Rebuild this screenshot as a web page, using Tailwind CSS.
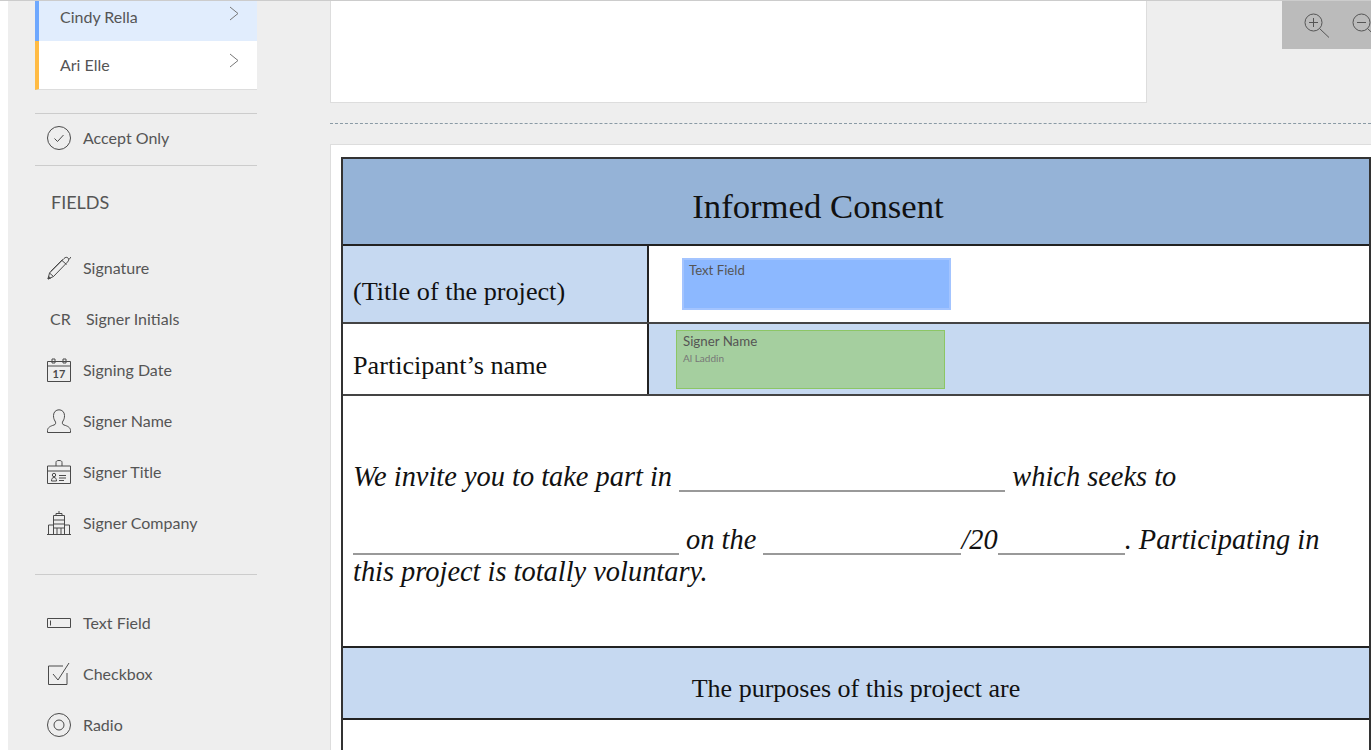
<!DOCTYPE html>
<html><head><meta charset="utf-8"><script src="https://cdn.jsdelivr.net/npm/@tailwindcss/browser@4"></script></head>
<body class="m-0 w-[1371px] h-[750px] overflow-hidden bg-white font-['Lato','Noto_Sans',sans-serif] text-[#555]">
<div class="relative flex h-[750px] border-t border-[#ccc]">
  <div class="w-2 shrink-0 bg-white"></div>
  <aside class="w-[322px] shrink-0 bg-[#eeeeee] pl-[27px] pr-[73px] text-[16px]">
    <div class="flex h-10 items-start justify-between border-l-4 border-[#6ea8fe] bg-[#e1edfd] pl-[21px] pr-[18px] text-[#555]"><span class="mt-[6px] leading-5">Cindy Rella</span><svg class="mt-[5px]" width="10" height="16" viewBox="0 0 10 16" fill="none" stroke="#777"><path d="M1 1l8 6.500-8 6.500"/></svg></div>
    <div class="flex h-[49px] items-start justify-between border-b border-[#ddd] border-l-4 border-l-[#ffbb44] bg-white pl-[21px] pr-[18px]"><span class="mt-[14px] leading-5">Ari Elle</span><svg class="mt-[12px]" width="10" height="16" viewBox="0 0 10 16" fill="none" stroke="#777"><path d="M1 1l8 6.500-8 6.500"/></svg></div>
    <div class="mt-[23px] flex h-[53px] items-center gap-[12px] border-y border-[#ccc] pb-[4px] pl-3">
      <svg width="24" height="24" viewBox="0 0 24 24" fill="none" stroke="#4a4a4a"><circle cx="12" cy="12" r="11.500"/><path d="M7.500 12.500l3 3 6-6.500"/></svg><span>Accept Only</span></div>
    <div class="mt-[25px] pl-4 text-[18px] leading-[22px]">FIELDS</div>
    <div class="mt-[29px]">
      <div class="flex h-[51px] items-center gap-[12px] pl-3"><svg width="24" height="24" viewBox="0 0 24 24" fill="none" stroke="#4a4a4a"><path d="M1 23l1.500-6L17 2.500c1.500-1.500 3-1.500 4-.5s1 2.500-.5 4L6.500 20.500z"/><path d="M2.500 17l4 3.500M15 4.500l4.500 4M3.500 15.500l12-12M22 3.500L24 1"/><path d="M1 23l2.500-.8-1.800-1.700z" fill="#4a4a4a"/></svg><span>Signature</span></div>
      <div class="flex h-[51px] items-center pl-[15px]"><span class="w-[36px]">CR</span><span>Signer Initials</span></div>
      <div class="flex h-[51px] items-center gap-[12px] pl-3"><svg width="24" height="24" viewBox="0 0 24 24" fill="none" stroke="#4a4a4a"><path d="M.5 3.500h23v20H.5zM.5 8h23M5 1h3v4H5zM16 1h3v4h-3z"/><text x="12" y="20" text-anchor="middle" font-size="11" font-family="Lato" fill="#4a4a4a" stroke="none" font-weight="700">17</text></svg><span>Signing Date</span></div>
      <div class="flex h-[51px] items-center gap-[12px] pl-3"><svg width="24" height="24" viewBox="0 0 24 24" fill="none" stroke="#4a4a4a"><path d="M.5 23.500v-2c0-3 3-4.500 6.500-5.500 2-.6 2-2.500 1-4-1-1.500-1.500-3-1.500-5.500C6.500 3 9 .8 12 .8s5.500 2.200 5.500 5.700c0 2.500-.5 4-1.500 5.500-1 1.500-1 3.400 1 4 3.500 1 6.500 2.500 6.500 5.500v2z"/></svg><span>Signer Name</span></div>
      <div class="flex h-[51px] items-center gap-[12px] pl-3"><svg width="24" height="24" viewBox="0 0 24 24" fill="none" stroke="#4a4a4a"><path d="M.5 6h23v17.500H.5zM.5 11h23M9 6V2.500C9 1 10 .5 12 .5s3 .5 3 2V6"/><circle cx="7" cy="15" r="1.700"/><path d="M4.500 21c0-2.500 1-3.500 2.500-3.500s2.500 1 2.500 3.500zM12 15.500h7M12 18h7M12 20.500h5"/></svg><span>Signer Title</span></div>
      <div class="flex h-[51px] items-center gap-[12px] pl-3"><svg width="24" height="24" viewBox="0 0 24 24" fill="none" stroke="#4a4a4a"><path d="M0 23.500h24M1.500 23.500V14h5v9.500M17.500 23.500V14h5v9.500M6.500 23.500V4.500h11v19M9 4.500V2.500h6v2M12 2.500V0M6.500 9h11M6.500 13h11M6.500 17h11M10 17v6.500M14 17v6.500"/></svg><span>Signer Company</span></div>
    </div>
    <div class="mt-[26px] border-t border-[#ccc]"></div>
    <div class="mt-[22px]">
      <div class="flex h-[51px] items-center gap-[12px] pl-3"><svg width="24" height="10" viewBox="0 0 24 10" fill="none" stroke="#4a4a4a"><path d="M.5.500h23v9H.5zM3.500 2.500v5"/></svg><span>Text Field</span></div>
      <div class="flex h-[51px] items-center gap-[12px] pl-3"><svg width="24" height="24" viewBox="0 0 24 24" fill="none" stroke="#4a4a4a"><path d="M20 11v11.500H1.500V4H16"/><path d="M6 12l5 6 11-17"/></svg><span>Checkbox</span></div>
      <div class="flex h-[51px] items-center gap-[12px] pl-3"><svg width="24" height="24" viewBox="0 0 24 24" fill="none" stroke="#4a4a4a"><circle cx="12" cy="12" r="11.500"/><circle cx="12" cy="12" r="5"/></svg><span>Radio</span></div>
    </div>
  </aside>
  <main class="min-w-0 flex-1 bg-[#eeeeee] font-['Liberation_Serif',serif] text-[#111]">
    <div class="h-[102px] w-[817px] border border-t-0 border-[#ddd] bg-white"></div>
    <div class="mt-[20px] border-t border-dashed border-[#8a9aa5]"></div>
    <div class="mt-[20px] border-t border-l border-[#ddd] bg-white pl-[10px] pt-3">
      <div class="border-2 border-[#333] border-b-0">
        <div class="flex h-[87px] items-center justify-center border-b-2 border-[#222] bg-[#95b3d7] pr-[76px] pt-[12px] text-[34.7px]">Informed Consent</div>
        <div class="flex h-[78px] border-b-2 border-[#444]">
          <div class="flex w-[306px] items-end border-r-2 border-[#222] bg-[#c6d9f1] pb-[15px] pl-[10px] text-[26.2px] leading-[30px]">(Title of the project)</div>
          <div class="flex-1 bg-white"></div>
        </div>
        <div class="flex h-[72px] border-b-2 border-[#444]">
          <div class="flex w-[306px] items-end border-r-2 border-[#222] bg-white pb-[13px] pl-[10px] text-[26.2px] leading-[30px]">Participant’s name</div>
          <div class="flex-1 bg-[#c6d9f1]"></div>
        </div>
        <div class="h-[252px] border-b-2 border-[#222] pl-[10px] pt-[65px] text-[28.4px] italic leading-[32px]">
          <div class="h-[32px] whitespace-nowrap">We invite you to take part in <span class="inline-block h-[31px] w-[326px] border-b-2 border-[#999] align-top not-italic"></span> which seeks to</div>
          <div class="mt-[31px] h-[32px] whitespace-nowrap"><span class="inline-block h-[31px] w-[326px] border-b-2 border-[#999] align-top"></span> on the <span class="inline-block h-[31px] w-[198px] border-b-2 border-[#999] align-top"></span>/20<span class="inline-block h-[31px] w-[127px] border-b-2 border-[#999] align-top"></span>. Participating in</div>
          <div class="whitespace-nowrap">this project is totally voluntary.</div>
        </div>
        <div class="flex h-[72px] items-center justify-center border-b-2 border-[#222] bg-[#c6d9f1] pt-[10px] text-[26px]">The purposes of this project are</div>
        <div class="h-[40px] bg-white"></div>
      </div>
    </div>
  </main>
  <div class="absolute left-[682px] top-[257px] h-[52px] w-[269px] border-2 border-[#a3c4ff] bg-[#8cb8ff] pl-[5px] pt-[1px] font-['Lato',sans-serif] text-[13.2px] leading-[18px] text-[#555]">Text Field</div>
  <div class="absolute left-[676px] top-[329px] h-[59px] w-[269px] border border-[#8cc665] bg-[#a5cf9f] pl-[6px] pt-[1px] font-['Lato',sans-serif] text-[13.3px] leading-[18px] text-[#555]">Signer Name<div class="mt-[1px] text-[10px] leading-[14px] text-[#777]">Al Laddin</div></div>
  <div class="absolute left-[1282px] top-0 flex h-[48px] w-[89px] gap-[22px] overflow-hidden bg-[#bbbbbb] pl-[22px] pt-[12px]">
    <svg class="shrink-0" width="26" height="26" viewBox="0 0 26 26" fill="none" stroke="#555"><circle cx="9.500" cy="9.500" r="8.500"/><path d="M15.500 15.500L25 24.500M5 9.500h9M9.500 5v9"/></svg>
    <svg class="shrink-0" width="26" height="26" viewBox="0 0 26 26" fill="none" stroke="#555"><circle cx="9.500" cy="9.500" r="8.500"/><path d="M15.500 15.500L25 24.500M5 9.500h9"/></svg>
  </div>
</div>
</body></html>
